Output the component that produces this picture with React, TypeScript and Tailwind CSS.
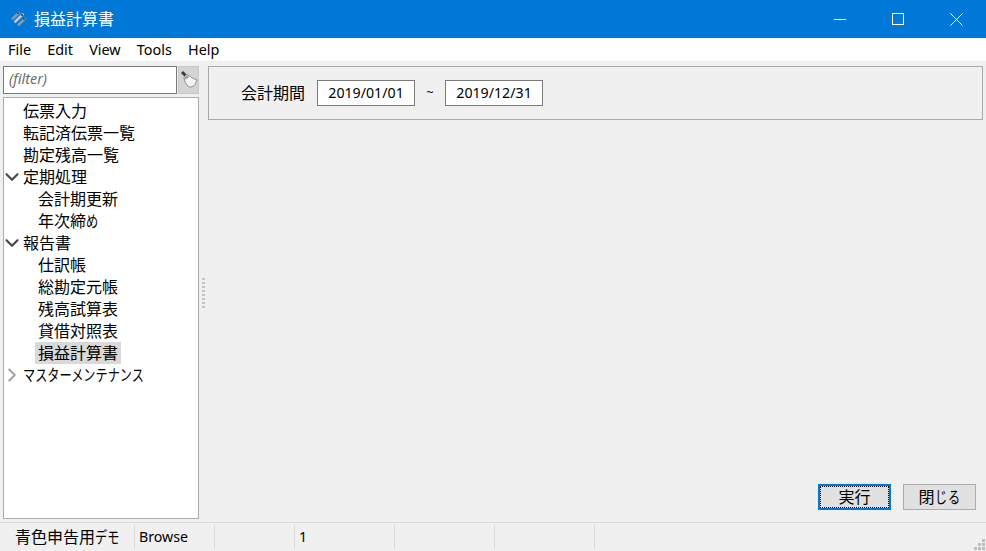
import type { ReactNode } from 'react';
import { ChevronDown, ChevronRight } from 'lucide-react';

const FONT = '[font-family:"Noto_Sans","Noto_Sans_CJK_JP",sans-serif]';

// 参照画面のかなは漢字より細いので横に縮める
function Kana({ children, width }: { children: string; width: number }) {
  return (
    <span className="inline-block origin-left scale-x-[0.76] whitespace-nowrap" style={{ width }}>
      {children}
    </span>
  );
}

type Row = { label: ReactNode; key: string; level: 0 | 1; arrow?: 'open' | 'closed'; selected?: boolean };

const ROWS: Row[] = [
  { key: 'a', label: '伝票入力', level: 0 },
  { key: 'b', label: '転記済伝票一覧', level: 0 },
  { key: 'c', label: '勘定残高一覧', level: 0 },
  { key: 'd', label: '定期処理', level: 0, arrow: 'open' },
  { key: 'e', label: '会計期更新', level: 1 },
  { key: 'f', label: <>年次締<Kana width={14}>め</Kana></>, level: 1 },
  { key: 'g', label: '報告書', level: 0, arrow: 'open' },
  { key: 'h', label: '仕訳帳', level: 1 },
  { key: 'i', label: '総勘定元帳', level: 1 },
  { key: 'j', label: '残高試算表', level: 1 },
  { key: 'k', label: '貸借対照表', level: 1 },
  { key: 'l', label: '損益計算書', level: 1, selected: true },
  { key: 'm', label: <Kana width={121}>マスターメンテナンス</Kana>, level: 0, arrow: 'closed' },
];

function AppIcon() {
  return (
    <svg width="18" height="18" viewBox="0 0 18 18" className="shrink-0">
      <g strokeWidth="2.6" strokeLinecap="square">
        <path d="M3 8.5 L8.5 3" stroke="#8d9aa6" />
        <path d="M5.5 11.5 L12.5 4.5" stroke="#c4c9ce" />
        <path d="M9 14.5 L14.5 9" stroke="#8d9aa6" />
      </g>
      <g fill="#4a5560">
        <rect x="7" y="2" width="2" height="2" />
        <rect x="11" y="4" width="2" height="2" />
        <rect x="13" y="8" width="2" height="2" />
      </g>
    </svg>
  );
}

function TitleBar() {
  return (
    <div className="flex h-[38px] items-center bg-[#0078d7] pl-[10px] text-white">
      <AppIcon />
      <span className="ml-[6px] text-[16px]">損益計算書</span>
      <div className="ml-auto flex h-full">
        <div className="flex w-[58px] items-center justify-center pb-[1px]">
          <svg width="12" height="12" viewBox="0 0 12 12">
            <path d="M0 6.5 H12" stroke="white" strokeWidth="1" />
          </svg>
        </div>
        <div className="flex w-[58px] items-center justify-center">
          <svg width="12" height="12" viewBox="0 0 12 12">
            <rect x="0.5" y="0.5" width="11" height="11" fill="none" stroke="white" strokeWidth="1" />
          </svg>
        </div>
        <div className="flex w-[59px] items-center justify-center pr-[1px]">
          <svg width="13" height="13" viewBox="0 0 13 13">
            <path d="M0.5 0.5 L12.5 12.5 M12.5 0.5 L0.5 12.5" stroke="white" strokeWidth="1" />
          </svg>
        </div>
      </div>
    </div>
  );
}

function MenuBar() {
  return (
    <div className="flex h-[23px] items-center gap-[16.2px] bg-white pt-[1px] pl-[8px] text-[14.4px] text-black">
      <span>File</span>
      <span>Edit</span>
      <span>View</span>
      <span>Tools</span>
      <span>Help</span>
    </div>
  );
}

function BroomIcon() {
  return (
    <svg width="19" height="22" viewBox="0 0 19 22">
      <path d="M3 3 L6.5 6.5" stroke="#3c3c3c" strokeWidth="3" />
      <path d="M5 8 L8 5.5 L10.5 7 C13 9 15 10 17.5 10.5 C17.5 14 15 18 11.5 18 C8 18 5.5 13 5 8 Z" fill="#f4f4f4" stroke="#8c8c8c" strokeWidth="1" />
      <path d="M5.5 8.5 L8 6.5 L10 8 L7 10.5 Z" fill="#9a9a9a" />
    </svg>
  );
}

function Sidebar() {
  return (
    <div className="flex w-[196px] shrink-0 flex-col">
      <div className="flex h-[28px] items-stretch gap-[1px]">
        <div className="flex w-[174px] items-center border border-[#7a7a7a] bg-white pb-[3px] pl-[5px] text-[14.4px] text-[#6d6d6d] italic">
          (filter)
        </div>
        <div className="flex w-[21px] items-center justify-center overflow-hidden border border-[#c8c8c8] bg-[#d4d4d4]">
          <BroomIcon />
        </div>
      </div>
      <div className="mt-[3px] h-[422px] border border-[#acacb0] bg-white pt-[2px]">
        {ROWS.map((row) => (
          <div key={row.key} className="relative flex h-[22px] items-center text-[16px] leading-[22px] whitespace-nowrap text-black">
            {row.arrow === 'open' && (
              <ChevronDown size={22} strokeWidth={2.4} className="absolute left-[-3px] text-[#4a4a4a]" />
            )}
            {row.arrow === 'closed' && (
              <ChevronRight size={22} strokeWidth={2.4} className="absolute left-[-3px] text-[#a6a6a6]" />
            )}
            <span
              className={
                row.level === 0
                  ? 'ml-[19px]'
                  : row.selected
                    ? 'ml-[31px] bg-[#d9d9d9] px-[3px]'
                    : 'ml-[34px]'
              }
            >
              {row.label}
            </span>
          </div>
        ))}
      </div>
    </div>
  );
}

function Splitter() {
  return (
    <div className="flex w-[9px] shrink-0 items-center justify-center pr-[1px]">
      <svg width="3" height="30" viewBox="0 0 3 30" className="fill-[#c4c4c4]">
        {[0, 4, 8, 12, 16, 20, 24, 28].map((y) => (
          <rect key={y} x="0" y={y} width="3" height="2" />
        ))}
      </svg>
    </div>
  );
}

function DateBox({ value }: { value: string }) {
  return (
    <div className="flex h-[26px] w-[98px] items-center justify-center border border-[#7a7a7a] bg-white text-[14.2px] text-black">
      {value}
    </div>
  );
}

function MainPanel() {
  return (
    <div className="flex min-w-0 flex-1 flex-col">
      <div className="flex h-[54px] items-center border border-[#a9a9ad] pl-[32px] text-[16px] text-black">
        <span>会計期間</span>
        <div className="ml-[12px]">
          <DateBox value="2019/01/01" />
        </div>
        <span className="w-[30px] text-center text-[13px]">~</span>
        <DateBox value="2019/12/31" />
      </div>
      <div className="mt-auto flex justify-end gap-[12px] pr-[7px] pb-[9px] text-[16px] text-black">
        <button className="flex h-[26px] w-[73px] items-center justify-center border-[2px] border-[#0078d7] bg-[#e1e1e1] outline-1 -outline-offset-3 outline-dotted outline-black">
          実行
        </button>
        <button className="flex h-[26px] w-[73px] items-center justify-center border border-[#adadad] bg-[#e1e1e1]">
          閉<Kana width={13}>じ</Kana><Kana width={13}>る</Kana>
        </button>
      </div>
    </div>
  );
}

function StatusCell({ className, children }: { className: string; children?: ReactNode }) {
  return (
    <div className={`my-[2px] flex items-center border-r border-[#d9d9d9] ${className}`}>{children}</div>
  );
}

function StatusBar() {
  return (
    <div className="relative flex h-[29px] border-t border-[#d9d9d9] bg-[#f0f0f0] text-[14.2px] text-black">
      <StatusCell className="w-[135px] pl-[15px] text-[16px] whitespace-nowrap">
        青色申告用<Kana width={25}>デモ</Kana>
      </StatusCell>
      <StatusCell className="w-[80px] pl-[4px]">Browse</StatusCell>
      <StatusCell className="w-[80px]" />
      <StatusCell className="w-[100px] pl-[4px]">1</StatusCell>
      <StatusCell className="w-[100px]" />
      <StatusCell className="w-[100px]" />
      {/* サイズグリップ */}
      <svg width="12" height="12" viewBox="0 0 12 12" className="absolute right-0 bottom-0 fill-[#bdbdbd]">
        <rect x="8" y="0" width="3" height="3" />
        <rect x="4" y="4" width="3" height="3" />
        <rect x="8" y="4" width="3" height="3" />
        <rect x="0" y="8" width="3" height="3" />
        <rect x="4" y="8" width="3" height="3" />
        <rect x="8" y="8" width="3" height="3" />
      </svg>
    </div>
  );
}

export default function App() {
  return (
    <div className={`flex h-[551px] w-[986px] flex-col overflow-hidden bg-[#f0f0f0] ${FONT}`}>
      <TitleBar />
      <MenuBar />
      <div className="flex flex-1 pt-[5px] pr-[3px] pb-[3px] pl-[3px]">
        <Sidebar />
        <Splitter />
        <MainPanel />
      </div>
      <StatusBar />
    </div>
  );
}
